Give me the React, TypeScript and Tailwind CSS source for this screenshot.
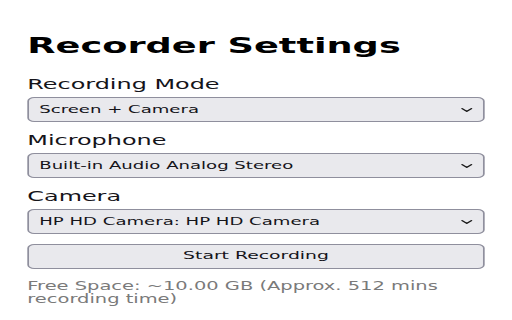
const fields = [
  { label: "Recording Mode", value: "Screen + Camera" },
  { label: "Microphone", value: "Built-in Audio Analog Stereo" },
  { label: "Camera", value: "HP HD Camera: HP HD Camera" },
];

function Chevron() {
  return (
    <svg width="7" height="4" viewBox="0 0 7 4" fill="none" className="text-[#1a1a1a]">
      <path d="M0.8 0.7 L3.5 3.3 L6.2 0.7" stroke="currentColor" strokeWidth="1.1" strokeLinecap="round" strokeLinejoin="round" />
    </svg>
  );
}

function SelectField({ label, value, last }: { label: string; value: string; last?: boolean }) {
  return (
    <div className={last ? "" : "mb-[8px]"}>
      <div className="leading-[20px] text-[14px] text-[#15141a]">{label}</div>
      <div className="mt-[3px] flex h-[25px] items-center justify-between rounded-[4px] border border-[#8f8f9d] bg-[#e9e9ed] pl-[6px] pr-[6px]">
        <span className="text-[10.6px] leading-none text-[#15141a]">{value}</span>
        <Chevron />
      </div>
    </div>
  );
}

export default function App() {
  return (
    <div className="h-[320px] w-[512px] overflow-hidden bg-white">
      {/* the reference is a 300px-wide page stretched to 512px */}
      <div className="w-[300px] origin-top-left scale-x-[1.70667] px-4 pt-8 font-['DejaVu_Sans',sans-serif]">
        <h1 className="text-[21.5px] font-bold leading-[28px] text-black">Recorder Settings</h1>
        <div className="mt-[14px]">
          {fields.map((f, i) => (
            <SelectField key={f.label} label={f.label} value={f.value} last={i === fields.length - 1} />
          ))}
        </div>
        <button className="mt-[10px] flex h-[25px] w-full items-center justify-center rounded-[4px] border border-[#8f8f9d] bg-[#e9e9ed] text-[11px] text-[#15141a]">
          Start Recording
        </button>
        <p className="mt-[11px] text-[11.4px] leading-[13px] text-[#7a7a7a]">
          Free Space: ~10.00 GB (Approx. 512 mins recording time)
        </p>
      </div>
    </div>
  );
}
